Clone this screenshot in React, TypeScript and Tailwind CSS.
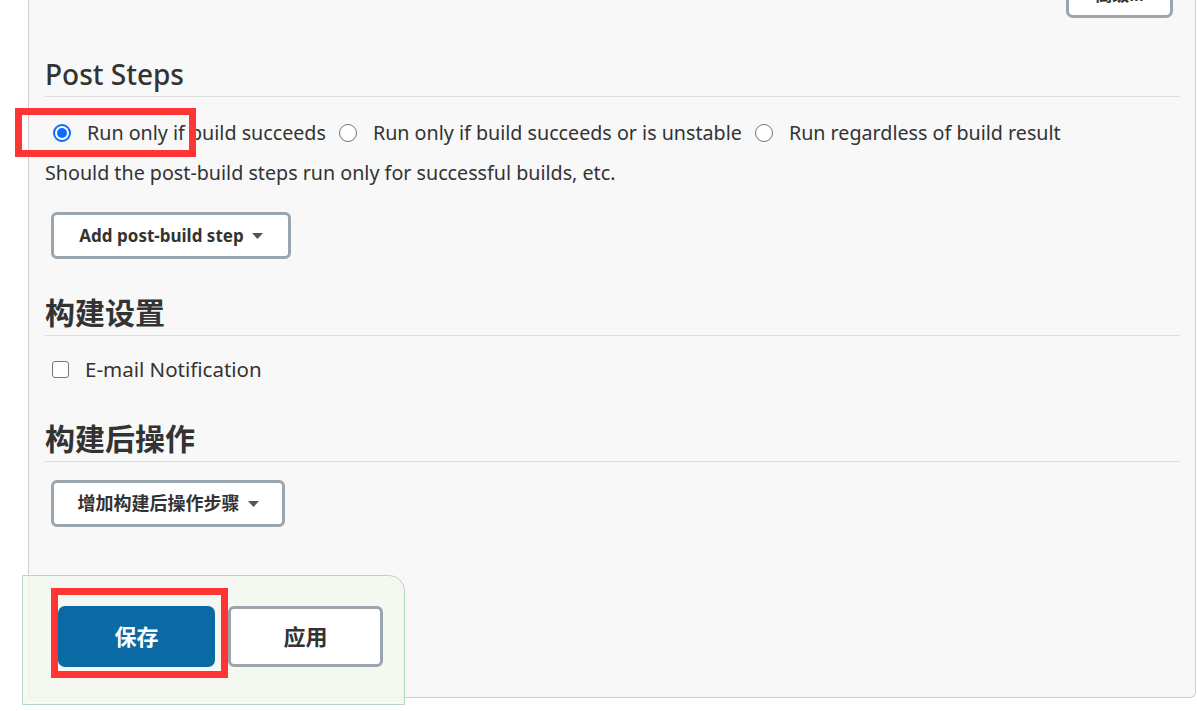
import React from "react";

const font = { fontFamily: '"Noto Sans", "Noto Sans CJK SC", sans-serif' };

const Radio = ({ checked, label }: { checked?: boolean; label: string }) => (
    <label className="flex items-center">
        {checked ? (
            <span className="w-[18px] h-[18px] rounded-full border-[2px] border-[#0b6cff] flex items-center justify-center bg-white">
                <span className="w-[10px] h-[10px] rounded-full bg-[#0b6cff]" />
            </span>
        ) : (
            <span className="w-[18px] h-[18px] rounded-full border-[1.5px] border-[#767676] bg-white" />
        )}
        <span className="ml-[16px] text-[19.7px] text-[#333]">{label}</span>
    </label>
);

const Caret = () => (
    <svg width="11" height="6" viewBox="0 0 11 6" className="ml-[8px]">
        <path d="M0 0h11L5.5 6z" fill="#555" />
    </svg>
);

const Section = ({ title }: { title: string }) => (
    <div className="text-[30px] leading-[34px] font-bold text-[#333] pb-[5px] border-b border-[#ddd]">
        {title}
    </div>
);

export default function App() {
    return (
        <div style={font} className="relative w-[1197px] h-[711px] bg-white overflow-hidden">
            {/* config panel */}
            <div className="ml-[28px] w-[1168px] h-[698px] bg-[#f8f8f8] border-l border-r border-b border-[#cfcfcf] rounded-br-[6px] pl-[16px] pr-[15px] flex flex-col">
                <div className="flex justify-end -mt-[28px]">
                    <button className="mr-[7px] w-[107px] h-[46px] bg-white border-[3px] border-[#9aa5ae] rounded-[7px] text-[17px] font-bold text-[#333]">
                        高级...
                    </button>
                </div>

                <div className="mt-[40px] text-[28px] leading-[32px] font-medium text-[#333] pb-[6px] border-b border-[#ddd]">
                    Post Steps
                </div>

                <div className="mt-[20px] h-[32px] flex items-center pl-[8px] gap-[13px]">
                    <Radio checked label="Run only if build succeeds" />
                    <Radio label="Run only if build succeeds or is unstable" />
                    <Radio label="Run regardless of build result" />
                </div>

                <div className="mt-[12px] text-[19.7px] leading-[24px] text-[#333]">
                    Should the post-build steps run only for successful builds, etc.
                </div>

                <div className="mt-[27px] ml-[6px]">
                    <button className="w-[240px] h-[47px] bg-white border-[3px] border-[#9aa5ae] rounded-[6px] text-[17px] font-bold text-[#333] flex items-center justify-center">
                        Add post-build step
                        <Caret />
                    </button>
                </div>

                <div className="mt-[37px]">
                    <Section title="构建设置" />
                </div>

                <div className="mt-[17px] h-[32px] flex items-center pl-[7px]">
                    <span className="w-[17px] h-[17px] rounded-[3px] border-[1.5px] border-[#767676] bg-white" />
                    <span className="ml-[16px] text-[20.5px] text-[#333]">E-mail Notification</span>
                </div>

                <div className="mt-[37px]">
                    <Section title="构建后操作" />
                </div>

                <div className="mt-[18px] ml-[6px]">
                    <button className="w-[234px] h-[47px] bg-white border-[3px] border-[#9aa5ae] rounded-[6px] text-[18px] font-bold text-[#333] flex items-center justify-center">
                        增加构建后操作步骤
                        <Caret />
                    </button>
                </div>
            </div>

            {/* sticky bottom bar */}
            <div className="absolute left-[22px] top-[575px] w-[383px] h-[130px] bg-[#f3f8ef]/80 border border-[#b3d9c0] rounded-tr-[16px] flex items-start gap-[13px] pl-[35px] pt-[30px]">
                <button className="w-[157px] h-[61px] bg-[#0b69a3] rounded-[7px] text-white text-[22px] font-bold">
                    保存
                </button>
                <button className="w-[155px] h-[61px] bg-white border-[3px] border-[#9aa5ae] rounded-[6px] text-[#333] text-[22px] font-bold">
                    应用
                </button>
            </div>

            {/* red annotation boxes */}
            <div className="absolute left-[15px] top-[108px] w-[181px] h-[49px] border-[7px] border-[#ff3535]" />
            <div className="absolute left-[51px] top-[588px] w-[177px] h-[90px] border-[7px] border-[#ff3535]" />
        </div>
    );
}
